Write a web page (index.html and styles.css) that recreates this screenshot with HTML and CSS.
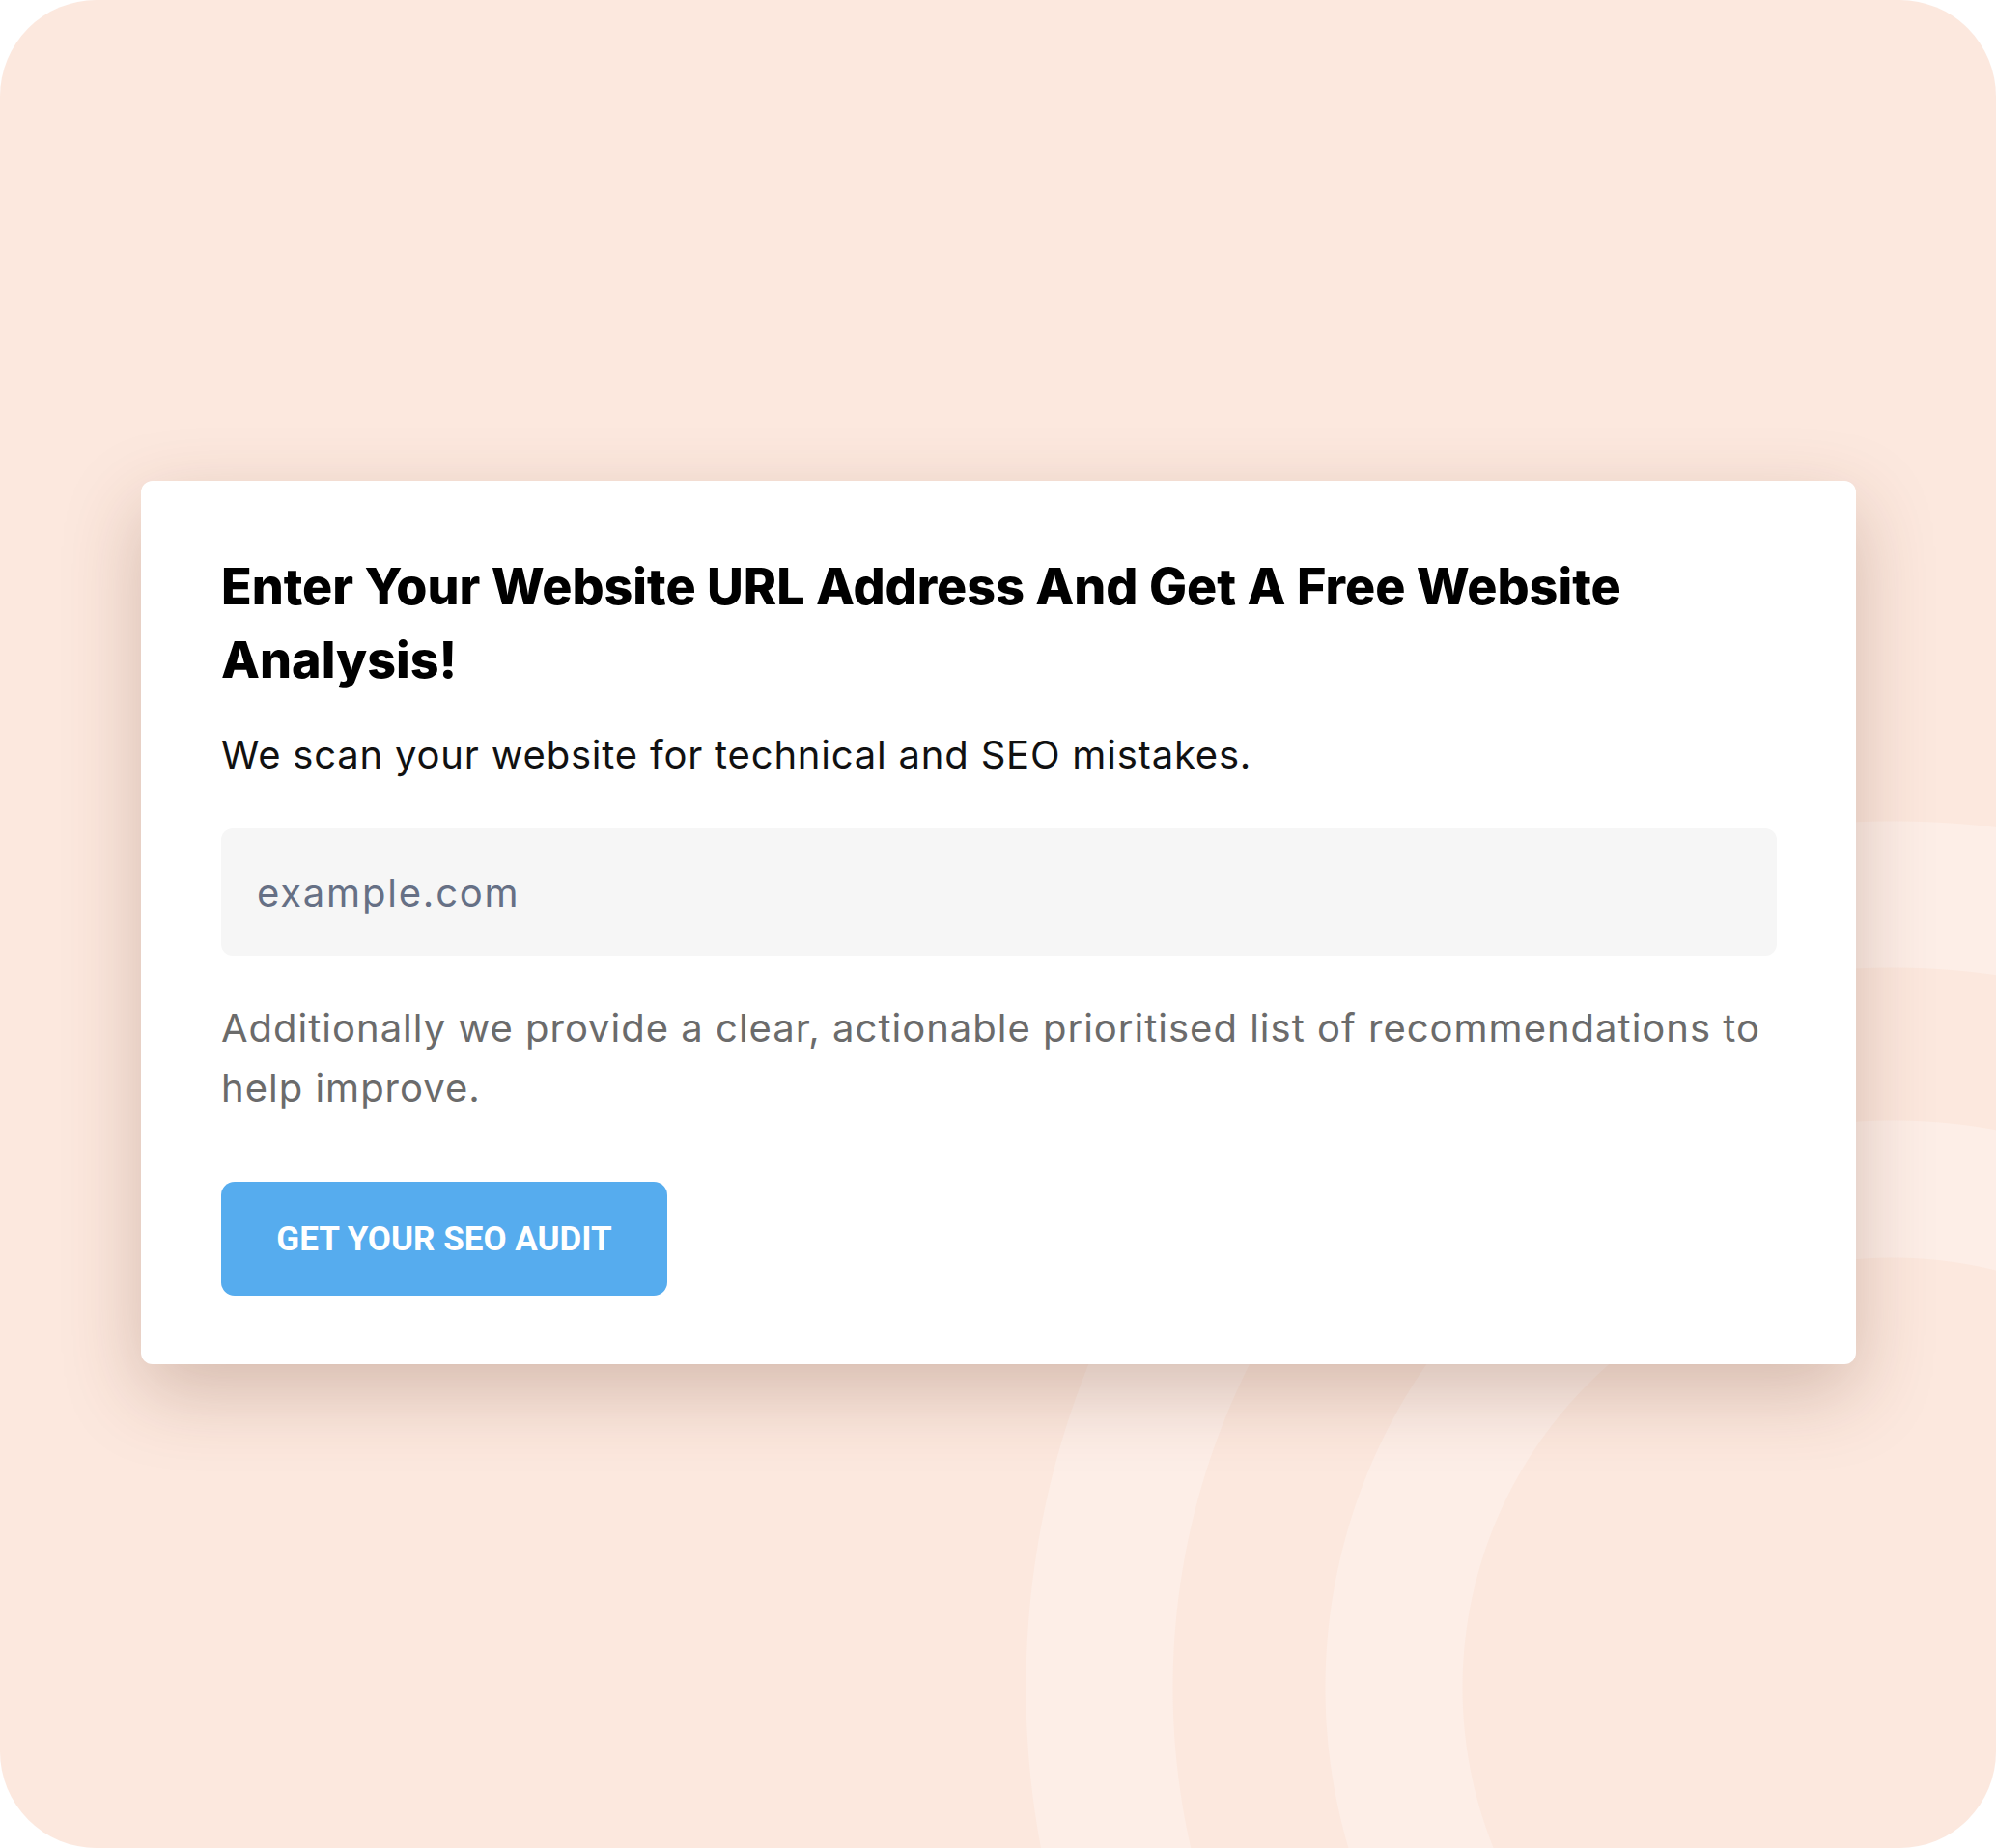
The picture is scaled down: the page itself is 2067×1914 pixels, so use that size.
FILE: index.html
```html
<!DOCTYPE html>
<html lang="en">
<head>
  <meta charset="UTF-8" />
  <meta name="viewport" content="width=device-width, initial-scale=1.0" />
  <title>Free Website Analysis</title>
  <link rel="stylesheet" href="styles.css">
</head>
<body>
  <div class="stage">
    <div class="audit-card">
      <h1>Enter Your Website URL Address And Get A Free Website Analysis!</h1>
      <p class="lead">We scan your website for technical and SEO mistakes.</p>
      <input type="text" class="url-input" placeholder="example.com" />
      <p class="note">Additionally we provide a clear, actionable prioritised list of recommendations to help improve.</p>
      <button class="audit-btn">GET YOUR SEO AUDIT</button>
    </div>
  </div>
</body>
</html>
```

FILE: styles.css
```css
body {
  margin: 0;
  background: #fff;
  font-family: Inter, "Noto Sans", sans-serif;
}
.stage {
  width: 2067px;
  height: 1914px;
  box-sizing: border-box;
  border-radius: 100px;
  background-color: #fce8de;
  background-image: radial-gradient(circle at 1960px 1748px,
    transparent 445px, #fdeee7 446px, #fdeee7 587px, transparent 588px,
    transparent 745px, #fdeee7 746px, #fdeee7 897px, transparent 898px);
  padding: 498px 145px 0 146px;
  overflow: hidden;
}
.audit-card {
  background: #fff;
  border-radius: 12px;
  box-shadow: 0 28px 80px rgba(100, 55, 35, 0.26);
  padding: 72px 82px 71px 83px;
}
h1 {
  margin: 0;
  font-size: 52px;
  line-height: 76px;
  font-weight: 800;
  letter-spacing: 0;
  color: #000;
}
.lead {
  margin: 32px 0 0;
  font-size: 40px;
  line-height: 56px;
  letter-spacing: 0.8px;
  color: #111;
}
.url-input {
  display: block;
  width: 100%;
  box-sizing: border-box;
  height: 132px;
  margin-top: 48px;
  padding: 0 37px;
  border: none;
  border-radius: 12px;
  background: #f6f6f6;
  font-family: inherit;
  font-size: 40px;
  letter-spacing: 1.8px;
  outline: none;
}
.url-input::placeholder {
  color: #667085;
}
.note {
  margin: 44px 0 0;
  font-size: 40px;
  line-height: 62px;
  letter-spacing: 1px;
  color: #6b6b6b;
}
.audit-btn {
  margin-top: 66px;
  width: 462px;
  height: 118px;
  border: none;
  border-radius: 14px;
  background: #56acee;
  color: #fff;
  font-family: Roboto, sans-serif;
  font-weight: 700;
  font-size: 35px;
  cursor: pointer;
}
```
